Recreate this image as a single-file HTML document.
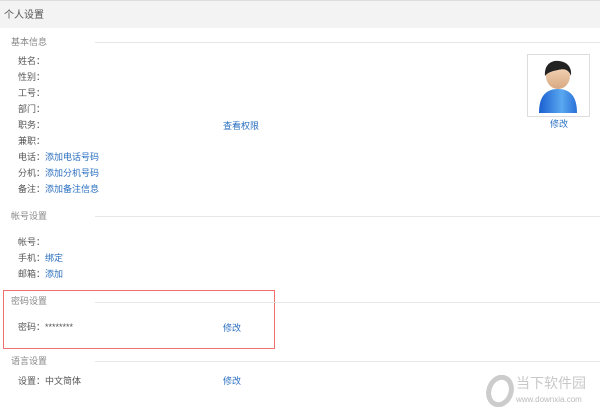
<html><head><style>
body{margin:0;width:600px;height:417px;background:#fff;font-family:"Liberation Sans","Noto Sans CJK SC",sans-serif;font-size:9px;color:#555;position:relative;overflow:hidden}
.a{position:absolute;white-space:nowrap;line-height:11px}
.h{color:#888}
.l{color:#2a6fc0}
.ln{position:absolute;left:95px;right:0;height:1px;background:#e6e6e6}
.lb{position:absolute;width:45px;text-align:right;left:0}
</style></head><body>
<div style="position:absolute;left:0;top:0;width:600px;height:1px;background:#ddd"></div>
<div style="position:absolute;left:0;top:1px;width:600px;height:27px;background:#f3f3f3"></div>
<div class="a" style="left:4px;top:10px;font-size:10px;color:#555">个人设置</div>

<div class="a h" style="left:11px;top:37px">基本信息</div><div class="ln" style="top:42px"></div>
<div class="a lb" style="top:56px">姓名： </div>
<div class="a lb" style="top:72px">性别： </div>
<div class="a lb" style="top:88px">工号： </div>
<div class="a lb" style="top:104px">部门： </div>
<div class="a lb" style="top:120px">职务： </div>
<div class="a lb" style="top:136px">兼职： </div>
<div class="a lb" style="top:152px">电话： </div><div class="a l" style="left:45px;top:152px">添加电话号码</div>
<div class="a lb" style="top:168px">分机： </div><div class="a l" style="left:45px;top:168px">添加分机号码</div>
<div class="a lb" style="top:184px">备注： </div><div class="a l" style="left:45px;top:184px">添加备注信息</div>
<div class="a l" style="left:223px;top:121px">查看权限</div>

<div style="position:absolute;left:527px;top:54px;width:61px;height:61px;border:1px solid #ddd;background:#fff">
<svg width="61" height="61" viewBox="0 0 61 61">
<defs><linearGradient id="b" x1="0" x2="1"><stop offset="0" stop-color="#1a5fd0"/><stop offset=".6" stop-color="#5aa8f0"/><stop offset="1" stop-color="#2a70d8"/></linearGradient>
<linearGradient id="f" x1="0" y1="0" x2="0" y2="1"><stop offset="0" stop-color="#f8dcc0"/><stop offset="1" stop-color="#d8a880"/></linearGradient></defs>
<path d="M11 58 C11 40 19 34 30 34 C41 34 49 40 49 58 Z" fill="url(#b)"/>
<ellipse cx="30" cy="21" rx="12" ry="13" fill="url(#f)"/>
<path d="M17 21 C16 8 25 5 31 6 C40 7 44 13 43 21 C41 15 37 13 30 15 C25 16 20 17 17 21Z" fill="#222"/>
</svg></div>
<div class="a l" style="left:550px;top:119px">修改</div>

<div class="a h" style="left:11px;top:211px">帐号设置</div><div class="ln" style="top:216px"></div>
<div class="a lb" style="top:237px">帐号： </div>
<div class="a lb" style="top:253px">手机： </div><div class="a l" style="left:45px;top:253px">绑定</div>
<div class="a lb" style="top:269px">邮箱： </div><div class="a l" style="left:45px;top:269px">添加</div>

<div style="position:absolute;left:3px;top:290px;width:270px;height:57px;border:1px solid #f07070"></div>
<div class="a h" style="left:11px;top:296px">密码设置</div><div class="ln" style="top:302px"></div>
<div class="a lb" style="top:322px">密码： </div><div class="a" style="left:45px;top:322px">********</div>
<div class="a l" style="left:223px;top:323px">修改</div>

<div class="a h" style="left:11px;top:356px">语言设置</div><div class="ln" style="top:361px"></div>
<div class="a lb" style="top:376px">设置： </div><div class="a" style="left:45px;top:376px">中文简体</div>
<div class="a l" style="left:223px;top:376px">修改</div>

<svg style="position:absolute;left:485px;top:375px" width="30" height="32" viewBox="0 0 30 32"><ellipse cx="15" cy="16" rx="11" ry="14" fill="none" stroke="#ccc" stroke-width="5" transform="rotate(20 15 16)"/></svg>
<div class="a" style="left:516px;top:375px;font-size:14px;line-height:16px;color:#c8c8c8">当下软件园</div>
<div class="a" style="left:516px;top:394px;font-size:8px;color:#bbb">www.downxia.com</div>
</body></html>
